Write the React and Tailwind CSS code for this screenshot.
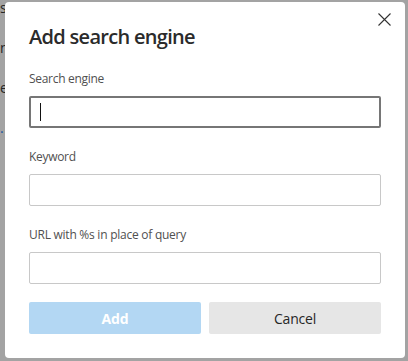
export default function App() {
  const font = { fontFamily: '"Open Sans", "Noto Sans", "Liberation Sans", sans-serif' };
  return (
    <div className="relative w-[408px] h-[361px] bg-[#a3a3a3] overflow-hidden" style={font}>
      <div className="flex flex-col gap-[24px] text-[14px] leading-[16px] text-[#262626]">
        <div>s</div>
        <div>n</div>
        <div>e</div>
        <div className="text-[#1a56a0]">.</div>
      </div>
      <div className="absolute left-[5px] top-[2px] w-[400px] h-[356px] bg-white rounded-[4px] flex flex-col px-[24px] pt-[22px]">
        <button className="absolute right-[14px] top-[11px] w-[13px] h-[13px] flex items-center justify-center">
          <svg width="13" height="13" viewBox="0 0 13 13" fill="none" stroke="#333" strokeWidth="1.1">
            <path d="M0.5 0.5 L12.5 12.5 M12.5 0.5 L0.5 12.5" />
          </svg>
        </button>
        <div className="text-[20px] leading-[26px] font-semibold text-[#2b2b2b] tracking-[-0.7px]">Add search engine</div>
        <div className="mt-[21px] text-[12px] leading-[16px] text-[#505050] tracking-[-0.3px]">Search engine</div>
        <div className="mt-[9px] h-[32px] border-2 border-[#767676] rounded-[2px] flex items-center pl-[9px]">
          <div className="w-[1px] h-[18px] bg-[#111]" />
        </div>
        <div className="mt-[21px] text-[12px] leading-[16px] text-[#505050] tracking-[-0.3px]">Keyword</div>
        <div className="mt-[9px] h-[32px] border border-[#c8c8c8] rounded-[2px]" />
        <div className="mt-[21px] text-[12px] leading-[16px] text-[#505050] tracking-[-0.25px]">URL with %s in place of query</div>
        <div className="mt-[9px] h-[32px] border border-[#c8c8c8] rounded-[2px]" />
        <div className="mt-[18px] flex gap-[8px]">
          <button className="flex-1 h-[32px] rounded-[2px] bg-[#b3d7f3] text-white text-[14px] font-bold tracking-[-0.2px]">Add</button>
          <button className="flex-1 h-[32px] rounded-[2px] bg-[#e6e6e6] text-[#262626] text-[14px] tracking-[-0.2px]">Cancel</button>
        </div>
      </div>
    </div>
  );
}
